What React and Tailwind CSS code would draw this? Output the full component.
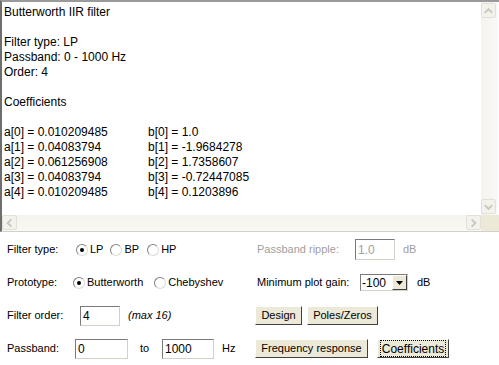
import React from 'react'

const lines = [
    'Butterworth IIR filter',
    '',
    'Filter type: LP',
    'Passband: 0 - 1000 Hz',
    'Order: 4',
    '',
    'Coefficients',
    '',
]

const coeffs = [
    ['a[0] = 0.010209485', 'b[0] = 1.0'],
    ['a[1] = 0.04083794', 'b[1] = -1.9684278'],
    ['a[2] = 0.061256908', 'b[2] = 1.7358607'],
    ['a[3] = 0.04083794', 'b[3] = -0.72447085'],
    ['a[4] = 0.010209485', 'b[4] = 0.1203896'],
]

const ArrowBtn = ({ dir, className }) => {
    const d = {
        up: 'M3 9 L7 5 L11 9',
        down: 'M3 5 L7 9 L11 5',
        left: 'M9 3 L5 7 L9 11',
        right: 'M5 3 L9 7 L5 11',
    }[dir]
    return (
        <div className={"flex items-center justify-center w-[15px] h-[15px] rounded-[2px] border border-[#e3e1d7] bg-[#f3f2ec] " + (className || '')}>
            <svg width="14" height="14" viewBox="0 0 14 14">
                <path d={d} fill="none" stroke="#c9c7ba" strokeWidth="2" />
            </svg>
        </div>
    )
}

const Radio = ({ checked, label }) => (
    <div className="flex items-center">
        <div className="relative w-[12px] h-[12px] rounded-full bg-white border border-[#808080] border-r-[#dcdcdc] border-b-[#dcdcdc]">
            {checked && <div className="absolute left-[3px] top-[3px] w-[4px] h-[4px] rounded-full bg-black"></div>}
        </div>
        <span className="ml-[2px]">{label}</span>
    </div>
)

const Field = ({ value, className, disabled }) => (
    <div className={"flex items-center h-[20px] pl-[2px] text-[12px] bg-white border border-[#7a7a7a] border-r-[#d4d0c8] border-b-[#d4d0c8] " + (disabled ? 'text-[#a0a0a0] ' : '') + className}>
        {value}
    </div>
)

const Btn = ({ children, className, focus }) => (
    <div className={"flex items-center justify-center h-[19px] bg-[#ece9d8] border border-white border-r-[#404040] border-b-[#404040] " + className}>
        {focus ? (
            <div className="flex items-center justify-center w-full h-full m-[2px] border border-dotted border-black text-[12px]">{children}</div>
        ) : children}
    </div>
)

export default function App() {
    return (
        <div className="w-[499px] h-[365px] bg-white text-[12px] text-black overflow-hidden" style={{ fontFamily: '"Liberation Sans", Arial, sans-serif' }}>
            {/* text area */}
            <div className="flex flex-col h-[232px] border-t-2 border-l-2 border-t-[#9a9a9a] border-l-[#6e6e6e] border-b border-b-[#d4d0c8]">
                <div className="flex flex-1 min-h-0">
                    <div className="flex-1 pl-[2px] pt-[3px] leading-[15px]">
                        {lines.map((l, i) => (
                            <div key={i} className="h-[15px]">{l}</div>
                        ))}
                        {coeffs.map(([a, b], i) => (
                            <div key={i} className="flex h-[15px]">
                                <span className="w-[144px]">{a}</span>
                                <span>{b}</span>
                            </div>
                        ))}
                    </div>
                    <div className="flex flex-col justify-between w-[17px] pt-[1px] pb-[1px] bg-gradient-to-r from-[#f4f3ee] to-[#faf9f5] mr-[1px]">
                        <ArrowBtn dir="up" />
                        <ArrowBtn dir="down" />
                    </div>
                </div>
                <div className="flex h-[16px]">
                    <div className="flex flex-1 justify-between bg-gradient-to-b from-[#f4f3ee] to-[#f9f8f3]">
                        <ArrowBtn dir="left" />
                        <ArrowBtn dir="right" />
                    </div>
                    <div className="w-[18px] bg-[#ece9d8]"></div>
                </div>
            </div>

            {/* controls */}
            <div className="flex flex-col pt-[1px] text-[11px]">
                <div className="flex items-center h-[33px]">
                    <div className="flex items-center w-[257px] pl-[7px]">
                        <span className="w-[69px]">Filter type:</span>
                        <Radio checked label="LP" />
                        <div className="ml-[7px]"><Radio label="BP" /></div>
                        <div className="ml-[8px]"><Radio label="HP" /></div>
                    </div>
                    <span className="w-[98px] text-[#a0a0a0]">Passband ripple:</span>
                    <Field value="1.0" disabled className="w-[40px] h-[21px]" />
                    <span className="ml-[8px] text-[#a0a0a0]">dB</span>
                </div>

                <div className="flex items-center h-[33px]">
                    <div className="flex items-center w-[257px] pl-[7px]">
                        <span className="w-[66px]">Prototype:</span>
                        <Radio checked label="Butterworth" />
                        <div className="ml-[11px]"><Radio label="Chebyshev" /></div>
                    </div>
                    <span className="w-[103px]">Minimum plot gain:</span>
                    <div className="flex items-center h-[17px] w-[48px] text-[12px] bg-white border border-[#7a7a7a] border-r-[#d4d0c8] border-b-[#d4d0c8]">
                        <span className="flex-1 pl-[1px]">-100</span>
                        <div className="flex items-center justify-center w-[15px] h-[15px] bg-[#ece9d8] border border-white border-r-[#404040] border-b-[#404040]">
                            <svg width="7" height="4" viewBox="0 0 7 4"><path d="M0 0 H7 L3.5 4 Z" fill="#000" /></svg>
                        </div>
                    </div>
                    <span className="ml-[9px]">dB</span>
                </div>

                <div className="flex items-center h-[33px]">
                    <div className="flex items-center w-[255px] pl-[7px]">
                        <span className="w-[73px]">Filter order:</span>
                        <Field value="4" className="w-[40px]" />
                        <span className="ml-[8px] italic">(max 16)</span>
                    </div>
                    <Btn className="w-[47px]">Design</Btn>
                    <Btn className="w-[71px] ml-[5px]">Poles/Zeros</Btn>
                </div>

                <div className="flex items-center h-[33px]">
                    <div className="flex items-center w-[255px] pl-[7px]">
                        <span className="w-[68px]">Passband:</span>
                        <Field value="0" className="w-[53px]" />
                        <span className="ml-[12px] w-[22px]">to</span>
                        <Field value="1000" className="w-[52px]" />
                        <span className="ml-[8px]">Hz</span>
                    </div>
                    <Btn className="w-[113px]">Frequency response</Btn>
                    <Btn className="w-[72px] ml-[9px]" focus>Coefficients</Btn>
                </div>
            </div>
        </div>
    )
}
